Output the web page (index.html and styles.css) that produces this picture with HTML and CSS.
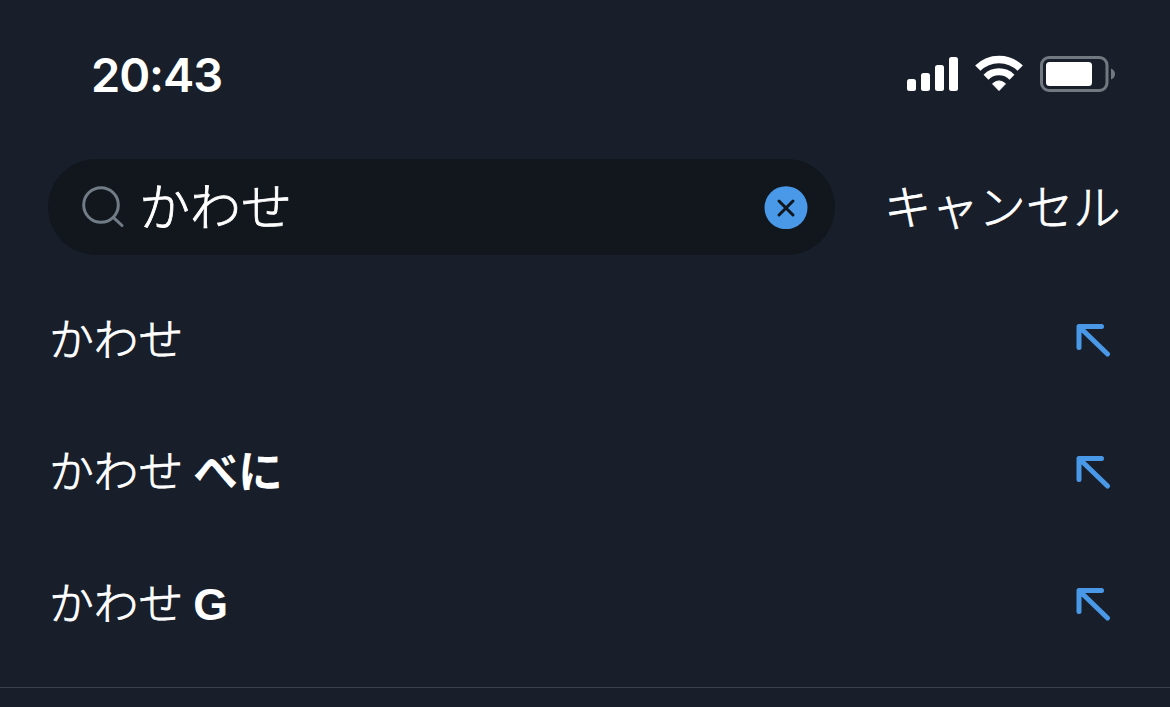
FILE: index.html
```html
<!DOCTYPE html>
<html lang="ja">
<head>
<meta charset="utf-8">
<title>検索</title>
<link rel="stylesheet" href="styles.css">
</head>
<body>
<div class="screen">
  <header class="status">
    <time class="clock">20:43</time>
    <div class="indicators">
      <svg class="signal" width="52" height="36" viewBox="0 0 52 36" fill="#fff">
        <rect x="1" y="23" width="9" height="12" rx="2.5"/>
        <rect x="15" y="17" width="9" height="18" rx="2.5"/>
        <rect x="29" y="9" width="9" height="26" rx="2.5"/>
        <rect x="43" y="1" width="9" height="34" rx="2.5"/>
      </svg>
      <svg class="wifi" width="50" height="38" viewBox="0 0 50 38" fill="none" stroke="#fff">
        <path d="M3.8 13.2A30 30 0 0 1 46.2 13.2" stroke-width="7.5"/>
        <path d="M12 22.2A18.5 18.5 0 0 1 38 22.200" stroke-width="7"/>
        <path d="M18.500 28.800Q25 23 31.500 28.800L25 35.600Z" fill="#fff" stroke-width="1" stroke-linejoin="round"/>
      </svg>
      <svg class="battery" width="76" height="38" viewBox="0 0 76 38">
        <rect x="1.5" y="2.5" width="65.500" height="33" rx="7.500" fill="none" stroke="#717880" stroke-width="3"/>
        <rect x="6" y="7" width="46" height="24" rx="3.500" fill="#fff"/>
        <path d="M71 13.500Q75 15 75 19T71 24.500Z" fill="#717880"/>
      </svg>
    </div>
  </header>
  <div class="search">
    <div class="field">
      <svg class="lens" width="44" height="44" viewBox="0 0 44 44" fill="none" stroke="#717c87" stroke-width="3">
        <circle cx="20" cy="20" r="17.300"/>
        <path d="M32.300 32.300L41 40.500" stroke-linecap="round"/>
      </svg>
      <span class="query">かわせ</span>
      <svg class="clear" width="44" height="44" viewBox="0 0 44 44">
        <circle cx="22" cy="22.700" r="21.500" fill="#4a99e9"/>
        <path d="M15 16L29 30M29 16L15 30" stroke="#11171d" stroke-width="3" stroke-linecap="round"/>
      </svg>
    </div>
    <span class="cancel">キャンセル</span>
  </div>
  <ul class="suggestions">
    <li class="row"><span class="term">かわせ</span>
      <svg class="arrow" width="36" height="36" viewBox="0 0 36 36"><path d="M4 25.500V4.500H26.500M5 5.500L32.500 32" /></svg></li>
    <li class="row"><span class="term">かわせ <b>べに</b></span>
      <svg class="arrow" width="36" height="36" viewBox="0 0 36 36"><path d="M4 25.500V4.500H26.500M5 5.500L32.500 32" /></svg></li>
    <li class="row"><span class="term">かわせ <b>G</b></span>
      <svg class="arrow" width="36" height="36" viewBox="0 0 36 36"><path d="M4 25.500V4.500H26.500M5 5.500L32.500 32" /></svg></li>
  </ul>
</div>
</body>
</html>
```
FILE: styles.css
```css
* { box-sizing: border-box; }
body {
  margin: 0;
  background: #181f2a;
  color: #fff;
  font-family: "Inter", "Noto Sans CJK JP", sans-serif;
}
.screen { height: 707px; overflow: hidden; }
svg { display: block; flex: none; }
.status {
  height: 148px;
  padding: 0 54px 0 91px;
  display: flex;
  justify-content: space-between;
  align-items: center;
}
.clock {
  padding-top: 1px;
  font-size: 47px;
  font-weight: 600;
  line-height: 60px;
  letter-spacing: -1.1px;
}
.indicators { display: flex; align-items: center; gap: 16px; }
.search {
  display: flex;
  align-items: center;
  margin-top: 11px;
  padding-left: 48px;
  height: 96px;
}
.field {
  display: flex;
  align-items: center;
  width: 787px;
  height: 96px;
  padding: 0 27px 0 33px;
  border-radius: 48px;
  background: #11171d;
}
.query,
.cancel,
.term {
  font-family: "Noto Sans CJK JP", sans-serif;
  font-weight: 300;
  line-height: 60px;
  -webkit-text-stroke: 0.8px #fff;
}
.query {
  flex: 1;
  margin-left: 14px;
  padding-bottom: 6px;
  font-size: 51px;
}
.cancel {
  margin-left: 49px;
  padding-bottom: 5px;
  font-size: 47.3px;
  white-space: nowrap;
}
.suggestions {
  list-style: none;
  margin: 0;
  height: 433px;
  padding: 19px 0 17px;
  border-bottom: 1px solid #3b434e;
}
.row {
  display: flex;
  align-items: center;
  justify-content: space-between;
  height: 132px;
  padding: 0 59px 0 49px;
}
.term { padding-bottom: 7px; font-size: 44.8px; }
.term b {
  font-family: "Liberation Sans", "Noto Sans CJK JP", sans-serif;
  font-weight: 700;
  line-height: 0;
  -webkit-text-stroke: 0;
}
.arrow path {
  fill: none;
  stroke: #4a99e9;
  stroke-width: 5;
  stroke-linecap: round;
  stroke-linejoin: round;
}
```
